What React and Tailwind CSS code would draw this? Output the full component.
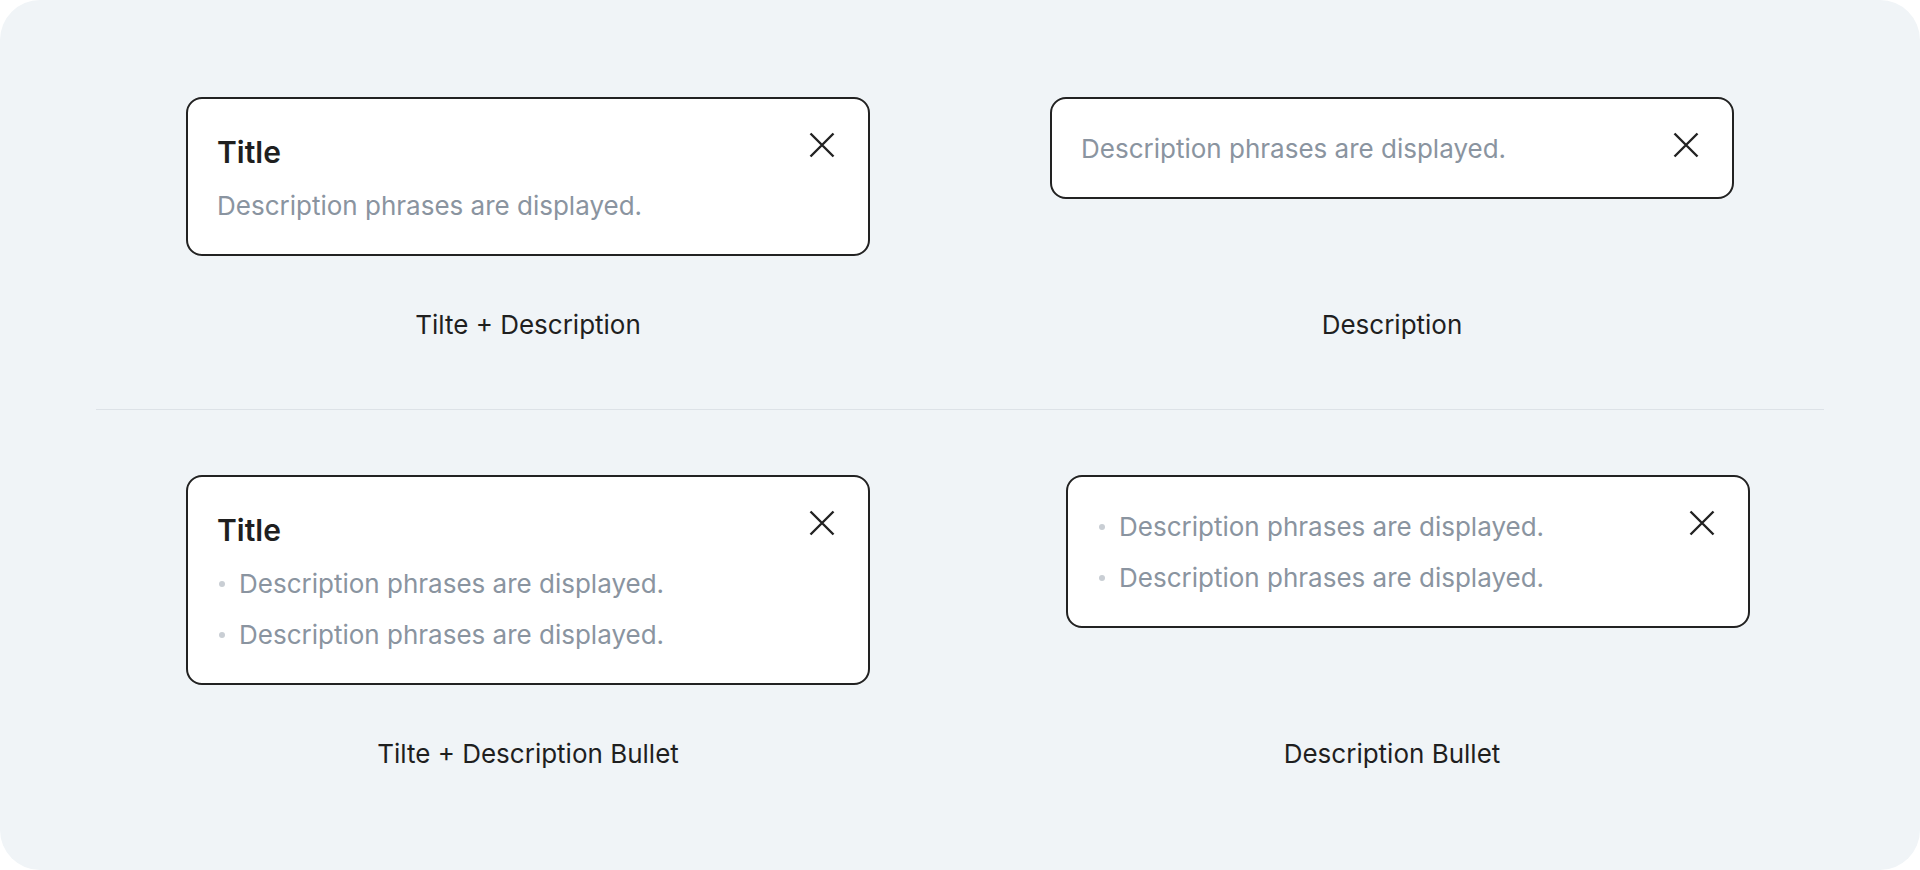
import React from 'react'

const font = { fontFamily: 'Inter, "Noto Sans", sans-serif' }

function CloseIcon() {
  return (
    <svg width="28" height="28" viewBox="0 0 28 28" fill="none" className="shrink-0">
      <path d="M2.5 2.5L25.5 25.5M25.5 2.5L2.5 25.5" stroke="#222222" strokeWidth="2.4" />
    </svg>
  )
}

function Bullet({ children }) {
  return (
    <div className="flex items-center">
      <span className="ml-[2px] mr-[14px] size-[6px] shrink-0 rounded-full bg-[#c9ced4]" />
      <span>{children}</span>
    </div>
  )
}

function Toast({ title, bullets, children }) {
  return (
    <div className="flex w-[684px] items-start gap-4 rounded-2xl border-2 border-[#222222] bg-white pt-8 pb-[30px] pl-[29px] pr-8">
      <div className="flex flex-1 flex-col gap-[15px]">
        {title && <div className="text-[30px] font-semibold leading-[42px] text-[#1f1f1f]">{title}</div>}
        {bullets ? (
          <div className="flex flex-col gap-[15px] text-[26px] leading-9 text-[#8a94a0]">
            {bullets.map((b, i) => (
              <Bullet key={i}>{b}</Bullet>
            ))}
          </div>
        ) : (
          <div className="text-[26px] leading-9 text-[#8a94a0]">{children}</div>
        )}
      </div>
      <CloseIcon />
    </div>
  )
}

function Label({ children }) {
  return <div className="text-center text-[26px] leading-9 text-[#1f1f1f]">{children}</div>
}

export default function App() {
  const desc = 'Description phrases are displayed.'
  return (
    <div className="min-h-screen bg-white" style={font}>
      <div className="h-[870px] rounded-[40px] bg-[#f0f4f7] px-24 pt-[97px]">
        <div className="grid grid-cols-2 gap-y-[51px]">
          <div className="flex justify-center items-start">
            <Toast title="Title">{desc}</Toast>
          </div>
          <div className="flex justify-center items-start">
            <Toast>{desc}</Toast>
          </div>
          <Label>Tilte + Description</Label>
          <Label>Description</Label>
        </div>

        <div className="mt-[66px] mb-[65px] h-px bg-[#dde2e7]" />

        <div className="grid grid-cols-2 gap-y-[51px]">
          <div className="flex justify-center items-start">
            <Toast title="Title" bullets={[desc, desc]} />
          </div>
          <div className="flex justify-center items-start">
            <div className="ml-8">
              <Toast bullets={[desc, desc]} />
            </div>
          </div>
          <Label>Tilte + Description Bullet</Label>
          <Label>Description Bullet</Label>
        </div>
      </div>
    </div>
  )
}
